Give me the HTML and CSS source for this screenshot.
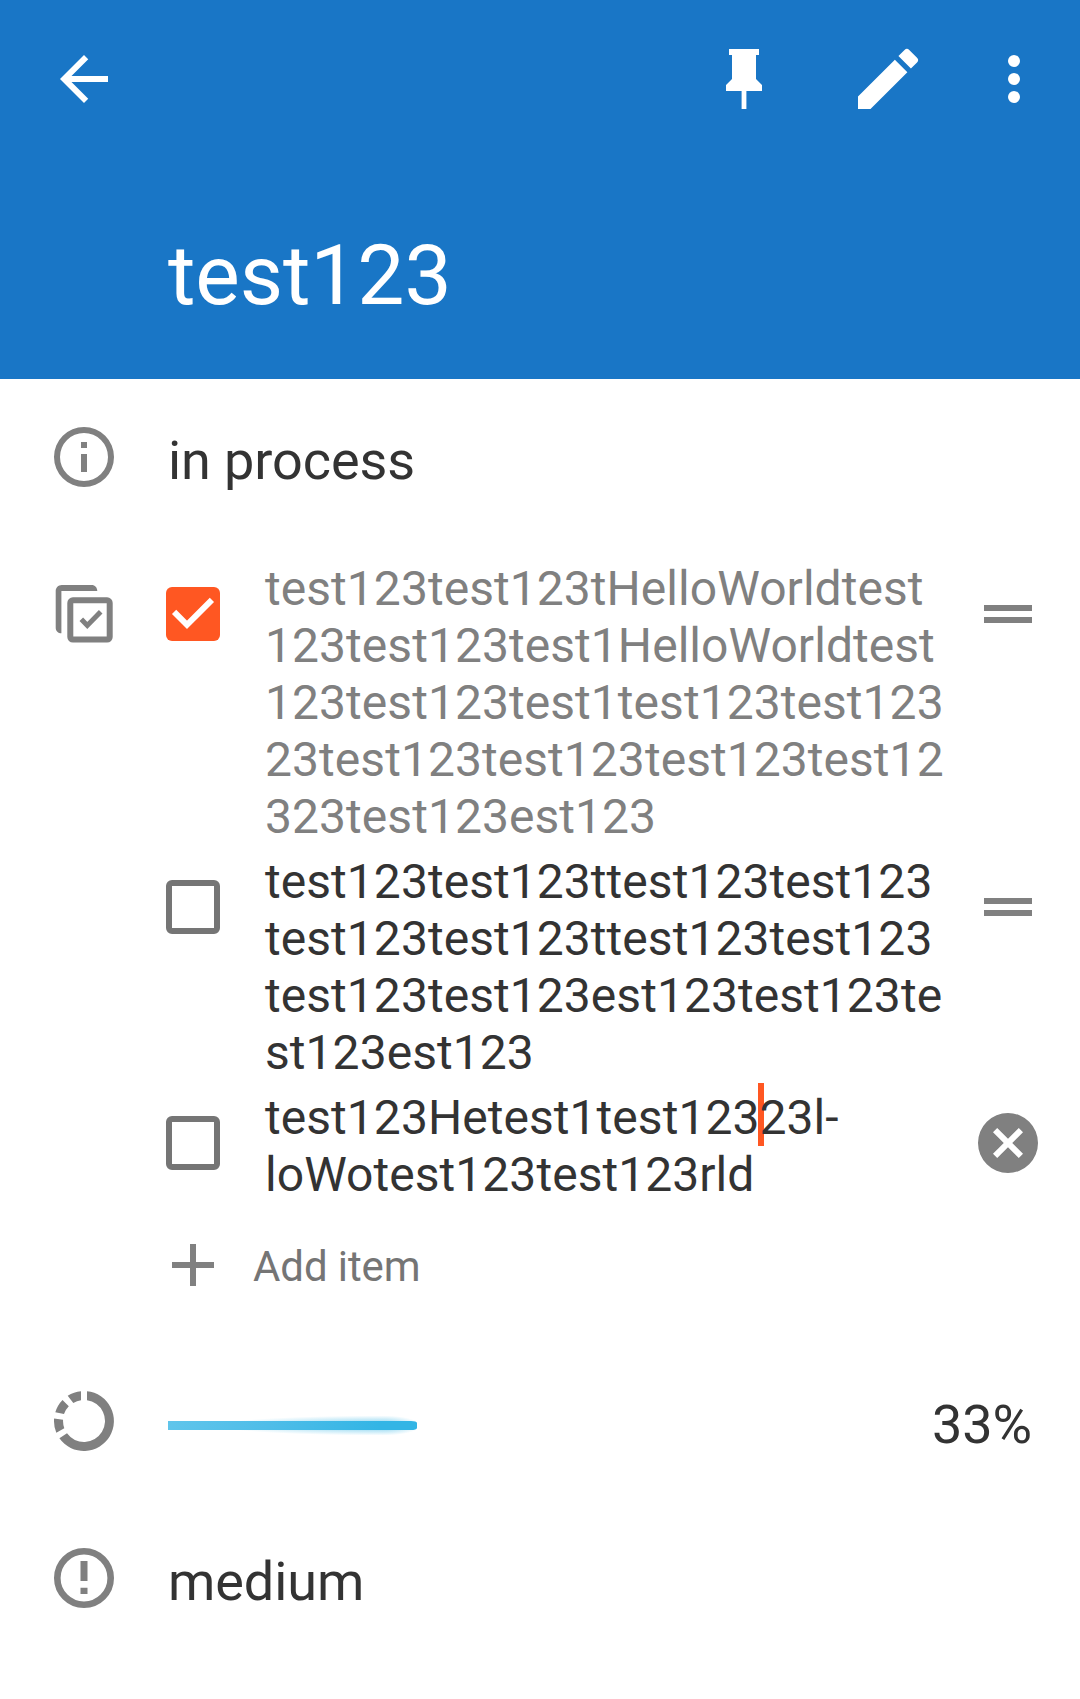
FILE: index.html
```html
<!DOCTYPE html>
<html lang="en">
<head>
<meta charset="utf-8">
<title>test123</title>
<link rel="stylesheet" href="styles.css">
</head>
<body>
<header class="app-bar">
  <nav class="toolbar">
    <svg class="icon" viewBox="0 0 24 24"><path d="M20 11H7.83l5.59-5.59L12 4l-8 8 8 8 1.41-1.41L7.83 13H20z"/></svg>
    <div class="actions">
      <svg class="icon" viewBox="0 0 24 24"><path d="M16 12V4h1V2H7v2h1v8l-2 2v2h5.2v6h1.6v-6H18v-2z"/></svg>
      <svg class="icon icon-edit" viewBox="0 0 24 24"><path d="M3 17.25V21h3.75L17.81 9.94l-3.75-3.75zM20.71 7.04a1 1 0 0 0 0-1.41l-2.34-2.34a1 1 0 0 0-1.41 0l-1.83 1.83 3.75 3.75z"/></svg>
      <svg class="icon" viewBox="0 0 24 24"><circle cx="12" cy="6" r="2"/><circle cx="12" cy="12" r="2"/><circle cx="12" cy="18" r="2"/></svg>
    </div>
  </nav>
  <h1 class="title">test123</h1>
</header>
<main class="details">
  <section class="row row-status">
    <svg class="icon" viewBox="0 0 24 24"><path d="M11 7h2v2h-2zm0 4h2v6h-2zm1-9a10 10 0 1 0 0 20 10 10 0 0 0 0-20m0 18a8 8 0 1 1 0-16 8 8 0 0 1 0 16"/></svg>
    <p class="value">in process</p>
  </section>
  <section class="row row-checklist">
    <svg class="icon icon-list" viewBox="0 0 72 72"><g fill="none" stroke="currentColor"><rect x="22.3" y="22.3" width="39.4" height="39.3" rx="2.6" stroke-width="6"/><path d="M33.3 41.3l6 6.2 13.4-13.7" stroke-width="5"/></g><path d="M13.4 55.3c-3.2 0-5.7-2.4-5.7-5.6V13c0-3.200 2.600-6 6-6h30c3.200 0 5.600 2.600 5.600 6H13.400z"/></svg>
    <div class="checklist">
      <div class="item done">
        <svg class="check" viewBox="0 0 54 54"><rect width="54" height="54" rx="6"/><path class="tick" d="M8.100 24.900L21 37.800 45.900 12.900"/></svg>
        <p class="item-text">test123test123tHelloWorldtest<br>123test123test1HelloWorldtest<br>123test123test1test123test123<br>23test123test123test123test12<br>323test123est123</p>
        <svg class="icon handle" viewBox="0 0 24 24"><path d="M4 9h16v2H4zm0 4h16v2H4z"/></svg>
      </div>
      <div class="item">
        <span class="check box"></span>
        <p class="item-text">test123test123ttest123test123<br>test123test123ttest123test123<br>test123test123est123test123te<br>st123est123</p>
        <svg class="icon handle" viewBox="0 0 24 24"><path d="M4 9h16v2H4zm0 4h16v2H4z"/></svg>
      </div>
      <div class="item">
        <span class="check box"></span>
        <p class="item-text">test123Hetest1test123<span class="caret"></span>23l-<br>loWotest123test123rld</p>
        <svg class="icon handle" viewBox="0 0 24 24"><path d="M12 2a10 10 0 1 0 0 20 10 10 0 0 0 0-20m5 13.590L15.590 17 12 13.410 8.410 17 7 15.590 10.590 12 7 8.410 8.410 7 12 10.590 15.590 7 17 8.410 13.410 12z"/></svg>
      </div>
      <div class="add">
        <svg class="icon" viewBox="0 0 24 24"><path d="M19 13h-6v6h-2v-6H5v-2h6V5h2v6h6z"/></svg>
        <span class="add-label">Add item</span>
      </div>
    </div>
  </section>
  <section class="row row-progress">
    <svg class="icon" viewBox="-36 -36 72 72"><path d="M3-29.850A30 30 0 1 1-24.600 17.300L-17 12.300A21 21 0 1 0 3-20.800zM-27.700 11.700A30 30 0 0 1-29.900-2.500L-20.900-1.300A21 21 0 0 0-19.700 7.300zM-28.700-8.700A30 30 0 0 1-21.500-21L-15.200-14.700A21 21 0 0 0-20-7zM-16.300-25.300A30 30 0 0 1-3-29.850V-20.800A21 21 0 0 0-10.700-18z"/></svg>
    <div class="track"><div class="bar"></div></div>
    <p class="value percent">33%</p>
  </section>
  <section class="row row-priority">
    <svg class="icon" viewBox="0 0 72 72"><circle cx="36" cy="36" r="26.700" fill="none" stroke="currentColor" stroke-width="6.600"/><path d="M32.500 19h7v20h-7zM32.500 45.700h7v6.300h-7z"/></svg>
    <p class="value">medium</p>
  </section>
</main>
</body>
</html>
```
FILE: styles.css
```css
* { box-sizing: border-box; }

body {
  margin: 0;
  background: #fff;
  color: #333;
  font-family: Roboto, "Liberation Sans", sans-serif;
}

h1, p { margin: 0; font-weight: 400; white-space: nowrap; }

.icon {
  display: block;
  flex: none;
  width: 72px;
  height: 72px;
  fill: currentColor;
}

/* App bar */
.app-bar {
  height: 379px;
  padding-top: 39px;
  background: #1976c6;
  color: #fff;
}

.toolbar {
  display: flex;
  align-items: center;
  justify-content: space-between;
  height: 80px;
  padding: 0 30px 0 48px;
}

.actions { display: flex; align-items: center; gap: 68px; }
.icon-edit { width: 80px; height: 80px; }
.actions .icon:last-child { margin-left: -18px; }

.title {
  padding: 108px 0 0 168px;
  font-size: 84px;
  line-height: 98px;
  letter-spacing: -.15px;
}

/* Detail rows */
.row {
  display: flex;
  align-items: flex-start;
  padding-left: 48px;
}

.row > .icon { margin-right: 48px; color: #808080; }
.row-status { height: 181px; padding-top: 42px; }
.row-checklist { height: 825px; }
.row-progress { height: 157px; padding-right: 48px; }
.value { padding-top: 8px; font-size: 54px; line-height: 64px; letter-spacing: -.08px; }

/* Checklist */
.row > .icon-list { margin-top: 18px; }
.checklist { flex: 1; }

.item {
  display: flex;
  align-items: flex-start;
  padding-bottom: 8px;
}

.check {
  flex: none;
  width: 54px;
  height: 54px;
  margin: 27px 45px 0 -2px;
  fill: #ff5722;
}

.box { border: 6px solid #757575; border-radius: 6px; }
.tick { fill: none; stroke: #fff; stroke-width: 6px; }

.item-text {
  position: relative;
  z-index: 0;
  flex: 1;
  font-size: 48px;
  line-height: 57px;
  letter-spacing: .05px;
}

.done .item-text { color: #808080; }
.handle { margin: 18px 36px 0 0; color: #808080; }

.caret { position: relative; }
.caret::before {
  content: "";
  position: absolute;
  z-index: -1;
  top: -6px;
  left: -1px;
  width: 6px;
  height: 63px;
  background: #ff5722;
}

.add {
  display: flex;
  align-items: center;
  margin-top: 18px;
  margin-left: -11px;
  color: #757575;
}
.add .icon { color: #808080; }
.add-label { padding: 3px 0 0 24px; font-size: 42px; line-height: 50px; letter-spacing: -.1px; }

/* Progress */
.track { flex: 1; padding-top: 36px; }

.bar {
  position: relative;
  width: 249px;
  height: 9px;
  background: linear-gradient(90deg, #60c5eb, #4fbde8 40%, #33b5e5 85%, #33b5e5);
  border-radius: 0 6px 6px 0 / 0 2px 2px 0;
}

.bar::before {
  content: "";
  position: absolute;
  z-index: -1;
  top: -6px;
  left: 50px;
  width: 199px;
  height: 21px;
  background:
    radial-gradient(ellipse 165px 10px at 165px 50%, rgba(51, 181, 229, .45) 35%, rgba(51, 181, 229, 0)) 0 0 / 165px 100% no-repeat,
    radial-gradient(ellipse 38px 10px at 0 50%, rgba(51, 181, 229, .45) 35%, rgba(51, 181, 229, 0)) 165px 0 / 34px 100% no-repeat;
}
```
